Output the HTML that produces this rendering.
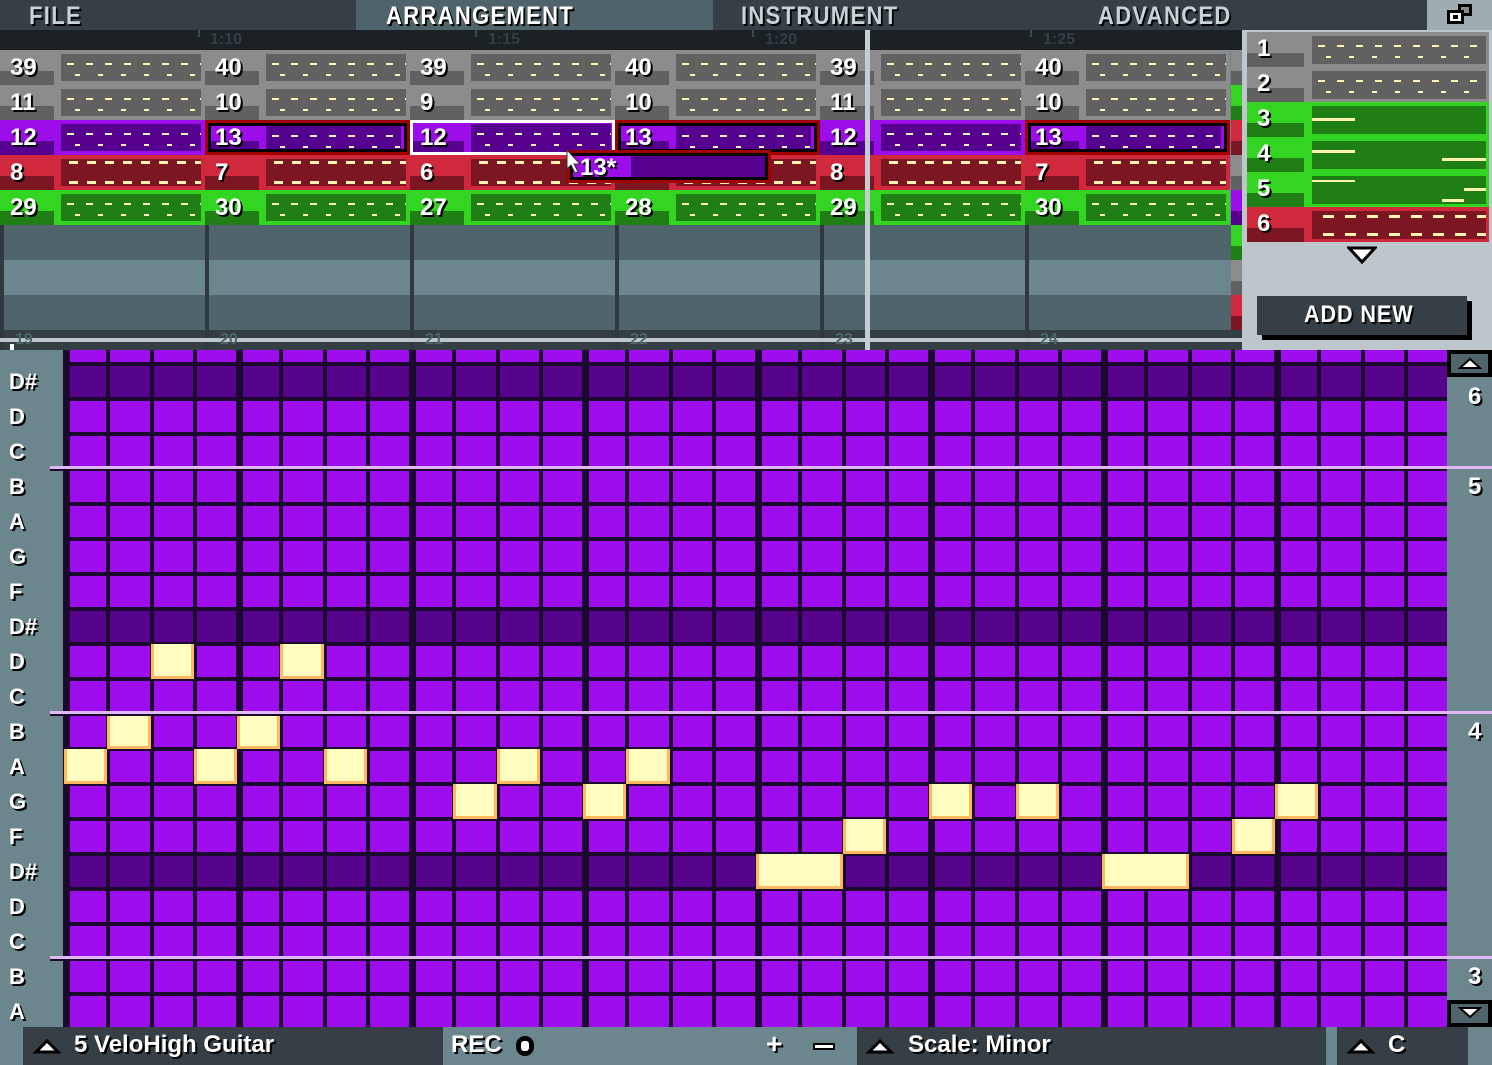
<!DOCTYPE html>
<html><head><meta charset="utf-8">
<style>
*{margin:0;padding:0;box-sizing:border-box}
body{width:1492px;height:1065px;overflow:hidden;background:#6b868c;position:relative;font-family:"Liberation Sans",sans-serif;font-weight:bold}
.a{position:absolute}
.t{color:#fff;text-shadow:2px 2px 0 #000;font-size:24px;line-height:1}
.menu{font-size:25px;color:#c9d2d6;text-shadow:2px 2px 0 #000;letter-spacing:1.5px;transform:scaleX(.88);transform-origin:0 0;top:2px}
.b{position:absolute;width:205px;height:35px}
.b .lo{position:absolute;left:0;top:21px;width:54px;height:14px}
.b .p{position:absolute;left:61px;top:4px;width:140px;height:27px}
.b .n{position:absolute;left:10px;top:6px}
.g{background:#8c8c8c}.g .lo,.g .p{background-color:#616161}
.u{background:#9b0de9}.u .lo,.u .p{background-color:#560090}
.r{background:#d0283c}.r .lo,.r .p{background-color:#7d1623}
.e{background:#33d422}.e .lo,.e .p{background-color:#1f7f15}
.p{background-repeat:no-repeat;background-image:repeating-linear-gradient(90deg,#fff4b0 0 7px,transparent 7px 19px),repeating-linear-gradient(90deg,#fff4b0 0 5px,transparent 5px 23px);background-size:100% 2px,100% 2px;background-position:6px 9px,14px 20px}
.r .p{background-image:repeating-linear-gradient(90deg,#fff4b0 0 9px,transparent 9px 18px),repeating-linear-gradient(90deg,#fff4b0 0 9px,transparent 9px 18px);background-position:8px 2px,8px 22px;background-size:100% 3px,100% 3px}
.sel{outline:3px solid #a00000;outline-offset:-3px;box-shadow:inset 0 0 0 6px #000}
.lbl{position:absolute;left:9px;font-size:22px;color:#fff;text-shadow:2px 2px 0 #000}
.bar{position:absolute;top:1027px;height:38px;background:#353f45}
</style></head><body>
<!-- menu -->
<div class="a" style="left:0;top:0;width:1492px;height:30px;background:#353f45"></div>
<div class="a" style="left:356px;top:0;width:357px;height:30px;background:#4f636a"></div>
<div class="a" style="left:1427px;top:0;width:65px;height:30px;background:#9fadb2"></div>
<div class="a" style="left:1458px;top:4px;width:14px;height:12px;background:#000;border:3px solid #000;box-shadow:inset 0 0 0 3px #8c8c8c"></div>
<div class="a" style="left:1447px;top:10px;width:17px;height:14px;background:#fff;border:3px solid #000;box-shadow:inset 0 0 0 3px #fff"><div class="a" style="left:3px;top:2px;width:5px;height:4px;background:#000"></div></div>
<div class="a menu" style="left:29px">FILE</div>
<div class="a menu" style="left:386px;color:#fff">ARRANGEMENT</div>
<div class="a menu" style="left:741px">INSTRUMENT</div>
<div class="a menu" style="left:1098px">ADVANCED</div>
<!-- timeline -->
<div class="a" style="left:0;top:30px;width:1242px;height:20px;background:#1b2124"></div>
<div class="a" style="left:198px;top:30px;width:2px;height:7px;background:#3b4a50"></div>
<div class="a" style="left:475px;top:30px;width:2px;height:7px;background:#3b4a50"></div>
<div class="a" style="left:752px;top:30px;width:2px;height:7px;background:#3b4a50"></div>
<div class="a" style="left:1030px;top:30px;width:2px;height:7px;background:#3b4a50"></div>
<div class="a" style="left:210px;top:31px;font-size:16px;color:#333f44">1:10</div>
<div class="a" style="left:488px;top:31px;font-size:16px;color:#333f44">1:15</div>
<div class="a" style="left:765px;top:31px;font-size:16px;color:#333f44">1:20</div>
<div class="a" style="left:1043px;top:31px;font-size:16px;color:#333f44">1:25</div>
<!-- empty rows -->
<div class="a" style="left:0;top:225px;width:1231px;height:35px;background:#4f646b"></div>
<div class="a" style="left:0;top:260px;width:1231px;height:35px;background:#6b868c"></div>
<div class="a" style="left:0;top:295px;width:1231px;height:35px;background:#4f646b"></div>
<div class="a" style="left:0;top:330px;width:1242px;height:20px;background:#343f44"></div>
<div class="a" style="left:0;top:225px;width:4px;height:125px;background:#2f3a3e"></div>
<div class="a" style="left:205px;top:225px;width:4px;height:125px;background:#2f3a3e"></div>
<div class="a" style="left:410px;top:225px;width:4px;height:125px;background:#2f3a3e"></div>
<div class="a" style="left:615px;top:225px;width:4px;height:125px;background:#2f3a3e"></div>
<div class="a" style="left:820px;top:225px;width:4px;height:125px;background:#2f3a3e"></div>
<div class="a" style="left:1025px;top:225px;width:4px;height:125px;background:#2f3a3e"></div>
<div class="a" style="left:0;top:338px;width:1242px;height:4px;background:#bcc6cb"></div>
<div class="a" style="left:15px;top:331px;font-size:16px;color:#4f646b">19</div>
<div class="a" style="left:220px;top:331px;font-size:16px;color:#4f646b">20</div>
<div class="a" style="left:425px;top:331px;font-size:16px;color:#4f646b">21</div>
<div class="a" style="left:630px;top:331px;font-size:16px;color:#4f646b">22</div>
<div class="a" style="left:835px;top:331px;font-size:16px;color:#4f646b">23</div>
<div class="a" style="left:1040px;top:331px;font-size:16px;color:#4f646b">24</div>
<!-- blocks row 0 -->
<div class="b g" style="left:0;top:50px"><div class="lo"></div><div class="p"></div><span class="n t">39</span></div>
<div class="b g" style="left:205px;top:50px"><div class="lo"></div><div class="p"></div><span class="n t">40</span></div>
<div class="b g" style="left:410px;top:50px"><div class="lo"></div><div class="p"></div><span class="n t">39</span></div>
<div class="b g" style="left:615px;top:50px"><div class="lo"></div><div class="p"></div><span class="n t">40</span></div>
<div class="b g" style="left:820px;top:50px"><div class="lo"></div><div class="p"></div><span class="n t">39</span></div>
<div class="b g" style="left:1025px;top:50px"><div class="lo"></div><div class="p"></div><span class="n t">40</span></div>
<!-- row 1 -->
<div class="b g" style="left:0;top:85px"><div class="lo"></div><div class="p"></div><span class="n t">11</span></div>
<div class="b g" style="left:205px;top:85px"><div class="lo"></div><div class="p"></div><span class="n t">10</span></div>
<div class="b g" style="left:410px;top:85px"><div class="lo"></div><div class="p"></div><span class="n t">9</span></div>
<div class="b g" style="left:615px;top:85px"><div class="lo"></div><div class="p"></div><span class="n t">10</span></div>
<div class="b g" style="left:820px;top:85px"><div class="lo"></div><div class="p"></div><span class="n t">11</span></div>
<div class="b g" style="left:1025px;top:85px"><div class="lo"></div><div class="p"></div><span class="n t">10</span></div>
<!-- row 2 purple -->
<div class="b u" style="left:0;top:120px"><div class="lo"></div><div class="p"></div><span class="n t">12</span></div>
<div class="b u sel" style="left:205px;top:120px"><div class="lo" style="left:6px;top:21px;width:48px;height:8px"></div><div class="p" style="top:6px;height:23px;width:135px"></div><span class="n t">13</span></div>
<div class="b u" style="left:410px;top:120px;outline:3px solid #fff;outline-offset:-3px"><div class="lo" style="left:3px;width:51px;height:11px"></div><div class="p" style="height:28px"></div><span class="n t">12</span></div>
<div class="b u sel" style="left:615px;top:120px"><div class="lo" style="left:6px;top:21px;width:48px;height:8px"></div><div class="p" style="top:6px;height:23px;width:135px"></div><span class="n t">13</span></div>
<div class="b u" style="left:820px;top:120px"><div class="lo"></div><div class="p"></div><span class="n t">12</span></div>
<div class="b u sel" style="left:1025px;top:120px"><div class="lo" style="left:6px;top:21px;width:48px;height:8px"></div><div class="p" style="top:6px;height:23px;width:135px"></div><span class="n t">13</span></div>
<!-- row 3 red -->
<div class="b r" style="left:0;top:155px"><div class="lo"></div><div class="p"></div><span class="n t">8</span></div>
<div class="b r" style="left:205px;top:155px"><div class="lo"></div><div class="p"></div><span class="n t">7</span></div>
<div class="b r" style="left:410px;top:155px"><div class="lo"></div><div class="p"></div><span class="n t">6</span></div>
<div class="b r" style="left:615px;top:155px"><div class="lo"></div><div class="p"></div><span class="n t">7</span></div>
<div class="b r" style="left:820px;top:155px"><div class="lo"></div><div class="p"></div><span class="n t">8</span></div>
<div class="b r" style="left:1025px;top:155px"><div class="lo"></div><div class="p"></div><span class="n t">7</span></div>
<!-- row 4 green -->
<div class="b e" style="left:0;top:190px"><div class="lo"></div><div class="p"></div><span class="n t">29</span></div>
<div class="b e" style="left:205px;top:190px"><div class="lo"></div><div class="p"></div><span class="n t">30</span></div>
<div class="b e" style="left:410px;top:190px"><div class="lo"></div><div class="p"></div><span class="n t">27</span></div>
<div class="b e" style="left:615px;top:190px"><div class="lo"></div><div class="p"></div><span class="n t">28</span></div>
<div class="b e" style="left:820px;top:190px"><div class="lo"></div><div class="p"></div><span class="n t">29</span></div>
<div class="b e" style="left:1025px;top:190px"><div class="lo"></div><div class="p"></div><span class="n t">30</span></div>
<!-- ghost -->
<div class="a" style="left:567px;top:150px;width:204px;height:33px;background:#560090;border:3px solid #a00000;box-shadow:inset 0 0 0 3px #000"><div class="a" style="left:3px;top:3px;width:58px;height:21px;background:#9b0de9"></div><span class="a t" style="left:10px;top:3px">13*</span></div>
<svg class="a" style="left:566px;top:149px" width="16" height="26" viewBox="0 0 16 26"><path d="M1 1 L1 20 L5 16 L9 24 L12 23 L8 15 L14 15 Z" fill="#fff" stroke="#333" stroke-width="1"/></svg>
<!-- color strip -->
<div class="a" style="left:1231px;top:50px;width:11px;height:280px;background:linear-gradient(#8c8c8c 0 21px,#616161 21px 35px,#33d422 35px 56px,#1f7f15 56px 70px,#d0283c 70px 91px,#7d1623 91px 105px,#8c8c8c 105px 126px,#616161 126px 140px,#9b0de9 140px 161px,#560090 161px 175px,#33d422 175px 196px,#1f7f15 196px 210px,#8c8c8c 210px 231px,#616161 231px 245px,#d0283c 245px 266px,#7d1623 266px 280px)"></div>
<!-- playhead -->
<div class="a" style="left:865px;top:30px;width:5px;height:320px;background:#c4ced2"></div>
<!-- right panel -->
<div class="a" style="left:1242px;top:30px;width:250px;height:320px;background:#bcc6cb"></div>
<div class="a" style="left:1247px;top:32px;width:242px;height:210px;background:linear-gradient(#8c8c8c 0 70px,#33d422 70px 175px,#d0283c 175px)"></div>
<div class="a" style="left:1247px;top:53px;width:57px;height:14px;background:#616161"></div>
<div class="a" style="left:1247px;top:88px;width:57px;height:14px;background:#616161"></div>
<div class="a" style="left:1247px;top:123px;width:57px;height:14px;background:#1f7f15"></div>
<div class="a" style="left:1247px;top:158px;width:57px;height:14px;background:#1f7f15"></div>
<div class="a" style="left:1247px;top:193px;width:57px;height:14px;background:#1f7f15"></div>
<div class="a" style="left:1247px;top:228px;width:57px;height:14px;background:#7d1623"></div>
<div class="a p" style="left:1312px;top:36px;width:174px;height:28px;background-color:#616161"></div>
<div class="a p" style="left:1312px;top:71px;width:174px;height:28px;background-color:#616161"></div>
<div class="a" style="left:1312px;top:106px;width:174px;height:28px;background:#1f7f15"><div class="a" style="left:0;top:12px;width:43px;height:3px;background:#fff4b0"></div></div>
<div class="a" style="left:1312px;top:141px;width:174px;height:28px;background:#1f7f15"><div class="a" style="left:0;top:9px;width:43px;height:3px;background:#fff4b0"></div><div class="a" style="left:130px;top:17px;width:44px;height:3px;background:#fff4b0"></div></div>
<div class="a" style="left:1312px;top:176px;width:174px;height:28px;background:#1f7f15"><div class="a" style="left:0;top:4px;width:43px;height:2px;background:#fff4b0"></div><div class="a" style="left:152px;top:12px;width:22px;height:3px;background:#fff4b0"></div><div class="a" style="left:130px;top:23px;width:22px;height:3px;background:#fff4b0"></div></div>
<div class="a" style="left:1312px;top:211px;width:174px;height:28px;background-color:#7d1623"><div class="a" style="left:0;top:4px;width:174px;height:3px;background:repeating-linear-gradient(90deg,transparent 0 11px,#fff4b0 11px 22px)"></div><div class="a" style="left:0;top:22px;width:174px;height:3px;background:repeating-linear-gradient(90deg,transparent 0 11px,#fff4b0 11px 22px)"></div></div>
<span class="a t" style="left:1257px;top:37px">1</span>
<span class="a t" style="left:1257px;top:72px">2</span>
<span class="a t" style="left:1257px;top:107px">3</span>
<span class="a t" style="left:1257px;top:142px">4</span>
<span class="a t" style="left:1257px;top:177px">5</span>
<span class="a t" style="left:1257px;top:212px">6</span>
<svg class="a" style="left:1347px;top:246px" width="30" height="20"><path d="M2 2 L28 2 L15 16 Z" fill="#fff" stroke="#000" stroke-width="3"/></svg>
<div class="a" style="left:1262px;top:301px;width:210px;height:39px;background:#000"></div>
<div class="a" style="left:1257px;top:296px;width:210px;height:39px;background:#353f45"></div>
<div class="a t" style="left:1304px;top:303px;font-size:24px;letter-spacing:1px;transform:scaleX(.9);transform-origin:0 0">ADD NEW</div>
<!-- grid -->
<div class="a" style="left:0;top:350px;width:63px;height:677px;background:#6b868c"></div>
<div id="grid" class="a" style="left:63px;top:350px;width:1384px;height:677px;background:#1b0a2e;overflow:hidden"></div>
<div class="a" style="left:1447px;top:350px;width:45px;height:677px;background:#6b868c"></div>
<div class="a" style="left:50px;top:466px;width:1442px;height:3px;background:#e0b8f8"></div>
<div class="a" style="left:50px;top:469px;width:1397px;height:2px;background:#1b0a2e"></div>
<div class="a" style="left:50px;top:711px;width:1442px;height:3px;background:#e0b8f8"></div>
<div class="a" style="left:50px;top:714px;width:1397px;height:2px;background:#1b0a2e"></div>
<div class="a" style="left:50px;top:956px;width:1442px;height:3px;background:#e0b8f8"></div>
<div class="a" style="left:50px;top:959px;width:1397px;height:2px;background:#1b0a2e"></div>
<div class="a" style="left:10px;top:344px;width:4px;height:6px;background:#fff"></div>
<span class="lbl" style="top:369px">D#</span>
<span class="lbl" style="top:404px">D</span>
<span class="lbl" style="top:439px">C</span>
<span class="lbl" style="top:474px">B</span>
<span class="lbl" style="top:509px">A</span>
<span class="lbl" style="top:544px">G</span>
<span class="lbl" style="top:579px">F</span>
<span class="lbl" style="top:614px">D#</span>
<span class="lbl" style="top:649px">D</span>
<span class="lbl" style="top:684px">C</span>
<span class="lbl" style="top:719px">B</span>
<span class="lbl" style="top:754px">A</span>
<span class="lbl" style="top:789px">G</span>
<span class="lbl" style="top:824px">F</span>
<span class="lbl" style="top:859px">D#</span>
<span class="lbl" style="top:894px">D</span>
<span class="lbl" style="top:929px">C</span>
<span class="lbl" style="top:964px">B</span>
<span class="lbl" style="top:999px">A</span>
<span class="a t" style="left:1468px;top:385px">6</span>
<span class="a t" style="left:1468px;top:475px">5</span>
<span class="a t" style="left:1468px;top:720px">4</span>
<span class="a t" style="left:1468px;top:965px">3</span>
<div class="a" style="left:1447px;top:350px;width:45px;height:27px;background:#4f646b;border:4px solid #000"></div>
<svg class="a" style="left:1458px;top:356px" width="24" height="14"><path d="M2 12 L12 3 L22 12 Z" fill="#fff" stroke="#000" stroke-width="2"/></svg>
<div class="a" style="left:1447px;top:1000px;width:45px;height:27px;background:#4f646b;border:4px solid #000"></div>
<svg class="a" style="left:1458px;top:1006px" width="24" height="14"><path d="M2 2 L12 11 L22 2 Z" fill="#fff" stroke="#000" stroke-width="2"/></svg>
<!-- bottom bar -->
<div class="a" style="left:0;top:1027px;width:1492px;height:38px;background:#6b868c"></div>
<div class="bar" style="left:23px;width:420px"></div>
<div class="bar" style="left:857px;width:469px"></div>
<div class="bar" style="left:1337px;width:131px"></div>
<svg class="a" style="left:33px;top:1036px" width="28" height="20"><path d="M3 16 L14 5 L25 16 Z" fill="#fff" stroke="#000" stroke-width="3"/></svg>
<svg class="a" style="left:866px;top:1036px" width="28" height="20"><path d="M3 16 L14 5 L25 16 Z" fill="#fff" stroke="#000" stroke-width="3"/></svg>
<svg class="a" style="left:1347px;top:1036px" width="28" height="20"><path d="M3 16 L14 5 L25 16 Z" fill="#fff" stroke="#000" stroke-width="3"/></svg>
<span class="a t" style="left:74px;top:1033px">5 VeloHigh Guitar</span>
<span class="a t" style="left:451px;top:1033px">REC</span>
<div class="a" style="left:516px;top:1036px;width:18px;height:20px;border-radius:9px;background:#000"><div class="a" style="left:5px;top:5px;width:8px;height:10px;background:#fff;border-radius:3px"></div></div>
<span class="a t" style="left:766px;top:1030px;font-size:28px">+</span>
<div class="a" style="left:813px;top:1043px;width:22px;height:7px;background:#fff;border:2px solid #000"></div>
<span class="a t" style="left:908px;top:1033px">Scale: Minor</span>
<span class="a t" style="left:1388px;top:1033px">C</span>
<script>
(function(){
var g=document.getElementById('grid'),h='';
for(var r=0;r<20;r++){var yy=331+35*r-350;var dark=(r==1||r==8||r==15);
for(var c=0;c<32;c++){var x0=c*43.25+(c%4==0?7:4),x1=(c+1)*43.25;
h+='<div class="a" style="left:'+x0.toFixed(1)+'px;top:'+yy+'px;width:'+(x1-x0).toFixed(1)+'px;height:31px;background:'+(dark?'#56048c':'#9d0dee')+'"></div>';}}
var notes=[[9,2,1],[9,5,1],[11,1,1],[11,4,1],[12,0,1],[12,3,1],[12,6,1],[12,10,1],[12,13,1],[13,9,1],[13,12,1],[13,20,1],[13,22,1],[13,28,1],[14,18,1],[14,27,1],[15,16,2],[15,24,2]];
notes.forEach(function(n){var l=n[1]*43.25+1,t=331+35*n[0]-352;
h+='<div class="a" style="left:'+l.toFixed(1)+'px;top:'+t+'px;width:'+(43.25*n[2]).toFixed(1)+'px;height:35px;background:#fffcc0;border:3px solid #ffb860;border-top:0"></div>';});
g.innerHTML=h;
})();
</script>
</body></html>
